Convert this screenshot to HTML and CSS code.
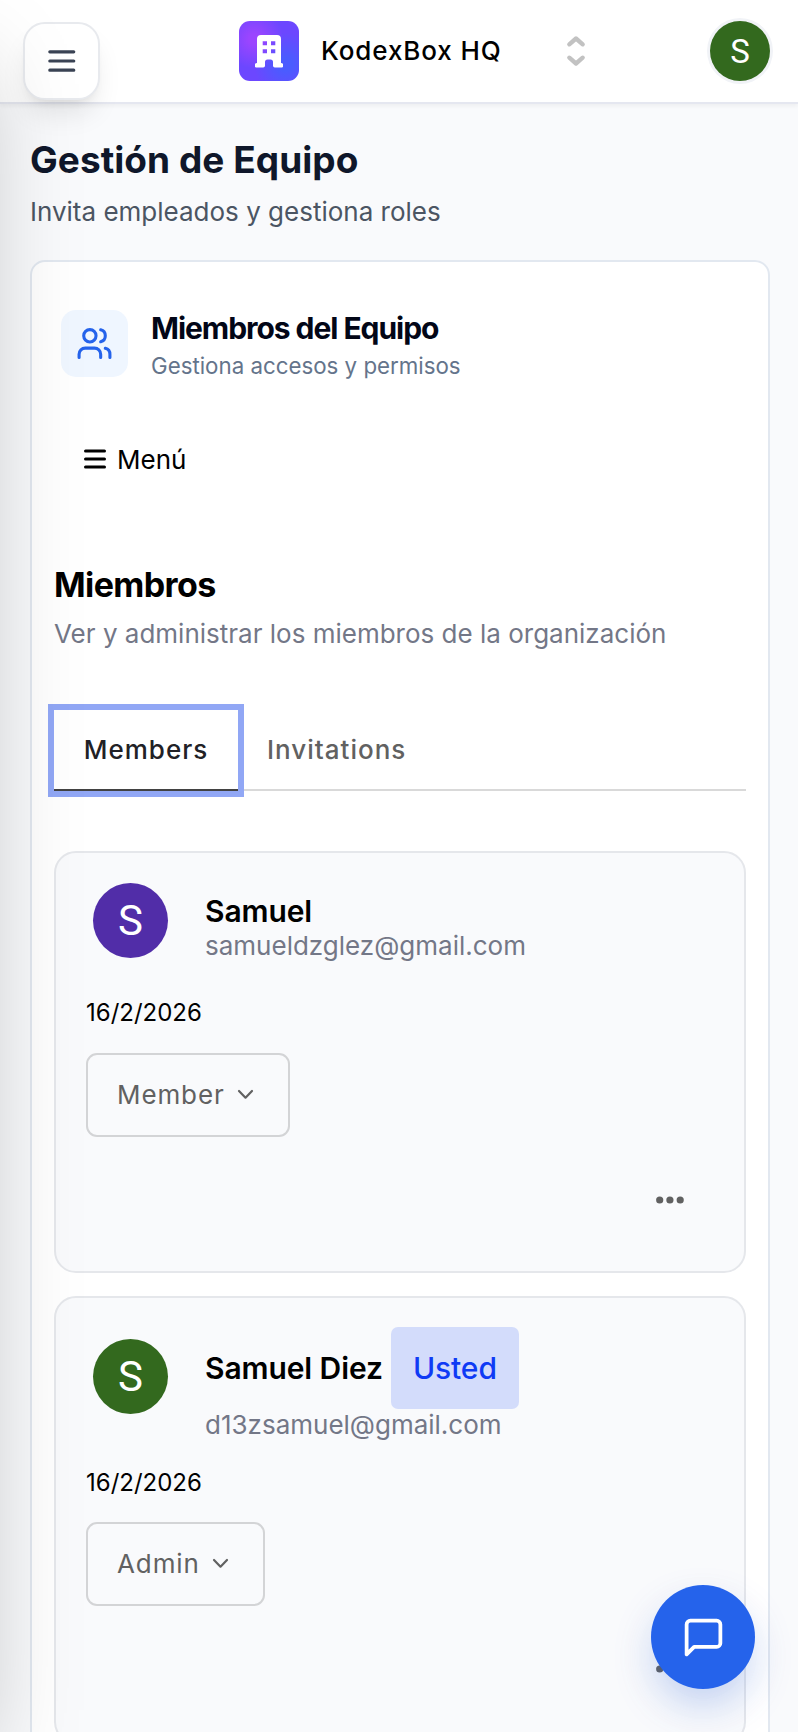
FILE: index.html
```html
<!DOCTYPE html>
<html lang="es">
<head>
    <meta charset="UTF-8">
    <meta name="viewport" content="width=device-width, initial-scale=1.0">
    <title>Gestión de Equipo</title>
    <link rel="stylesheet" href="styles.css">
</head>
<body>
    <header class="topbar">
        <button class="menu-toggle" aria-label="Abrir menú">
            <svg width="35" height="36" viewBox="0 0 24 24" fill="none" stroke="currentColor" stroke-width="2.2" stroke-linecap="round"><path d="M4 5.700h16.400M4 12h16.400M4 18.300h16.400"/></svg>
        </button>
        <div class="org-switcher">
            <span class="org-logo">
                <svg width="28" height="33" viewBox="0 0 28 33" fill="#fff"><path fill-rule="evenodd" d="M6 0h16a4 4 0 0 1 4 4v24a2.2 2.2 0 0 1 0 4.6h-6.2a1.8 1.8 0 0 1-1.8-1.8V27a2.5 2.5 0 0 0-2.5-2.5h-3A2.500 2.500 0 0 0 10 27v3.800a1.8 1.8 0 0 1-1.8 1.8H2a2.200 2.200 0 0 1 0-4.600V4a4 4 0 0 1 4-4zM7.700 6.300v4h4.300v-4zM16 6.300v4h4.300v-4zM7.700 14.300v4h4.300v-4zM16 14.300v4h4.300v-4z"/></svg>
            </span>
            <span class="org-name">KodexBox HQ</span>
            <svg class="org-arrows" width="20" height="32" viewBox="0 0 20 32" fill="none" stroke="#c2c2c2" stroke-width="4.3" stroke-linecap="round" stroke-linejoin="round"><path d="M3.3 9.300L10 3.500l6.700 5.800M3.300 22.700l6.700 5.800 6.700-5.800"/></svg>
        </div>
        <div class="user-avatar">S</div>
    </header>

    <main>
        <h1>Gestión de Equipo</h1>
        <p class="subtitle">Invita empleados y gestiona roles</p>

        <section class="panel">
            <div class="panel-header">
                <div class="panel-icon">
                    <svg width="37" height="37" viewBox="0 0 24 24" fill="none" stroke="currentColor" stroke-width="2" stroke-linecap="round" stroke-linejoin="round"><path d="M16 21v-2a4 4 0 0 0-4-4H6a4 4 0 0 0-4 4v2"/><circle cx="9" cy="7" r="4"/><path d="M22 21v-2a4 4 0 0 0-3-3.870"/><path d="M16 3.130a4 4 0 0 1 0 7.750"/></svg>
                </div>
                <div>
                    <h2>Miembros del Equipo</h2>
                    <p>Gestiona accesos y permisos</p>
                </div>
            </div>

            <button class="nav-menu">
                <svg width="22" height="20" viewBox="0 0 22 20" stroke="#000" stroke-width="3" stroke-linecap="round"><path d="M1.500 2h19M1.500 10h19M1.500 18h19"/></svg>
                <span>Menú</span>
            </button>

            <h3>Miembros</h3>
            <p class="description">Ver y administrar los miembros de la organización</p>

            <div class="tabs">
                <button class="tab active">Members</button>
                <button class="tab">Invitations</button>
            </div>

            <div class="member">
                <div class="member-info">
                    <div class="avatar purple">S</div>
                    <div>
                        <div class="name">Samuel</div>
                        <div class="email">samueldzglez@gmail.com</div>
                    </div>
                </div>
                <div class="date">16/2/2026</div>
                <button class="role">Member
                    <svg width="17" height="12" viewBox="0 0 17 12" fill="none" stroke="currentColor" stroke-width="2.2" stroke-linecap="round" stroke-linejoin="round"><path d="M2 2l6.500 6.700L15 2"/></svg>
                </button>
                <div class="actions">
                    <svg width="28" height="8" viewBox="0 0 28 8" fill="currentColor"><circle cx="3.7" cy="4" r="3.6"/><circle cx="13.9" cy="4" r="3.6"/><circle cx="24.2" cy="4" r="3.6"/></svg>
                </div>
            </div>

            <div class="member self">
                <div class="member-info">
                    <div class="avatar green">S</div>
                    <div>
                        <div class="name">Samuel Diez <span class="badge">Usted</span></div>
                        <div class="email">d13zsamuel@gmail.com</div>
                    </div>
                </div>
                <div class="date">16/2/2026</div>
                <button class="role">Admin
                    <svg width="17" height="12" viewBox="0 0 17 12" fill="none" stroke="currentColor" stroke-width="2.2" stroke-linecap="round" stroke-linejoin="round"><path d="M2 2l6.500 6.700L15 2"/></svg>
                </button>
                <div class="actions">
                    <svg width="28" height="8" viewBox="0 0 28 8" fill="currentColor"><circle cx="3.7" cy="4" r="3.6"/><circle cx="13.9" cy="4" r="3.6"/><circle cx="24.2" cy="4" r="3.6"/></svg>
                </div>
            </div>
        </section>
    </main>

    <!-- Menú lateral cerrado -->
    <aside class="sidebar"></aside>

    <button class="chat-btn" aria-label="Chat">
        <svg width="45" height="45" viewBox="0 0 24 24" fill="none" stroke="currentColor" stroke-width="2" stroke-linecap="round" stroke-linejoin="round"><path d="M21 15a2 2 0 0 1-2 2H7l-4 4V5a2 2 0 0 1 2-2h14a2 2 0 0 1 2 2z"/></svg>
    </button>
</body>
</html>
```
FILE: styles.css
```css
* { box-sizing: border-box; margin: 0; padding: 0; }
body { font-family: 'Inter', sans-serif; font-size: 26px; background: #f9fafc; color: #000; height: 1732px; overflow: hidden; }
button { font: inherit; border: none; background: none; cursor: pointer; }
svg { display: block; flex-shrink: 0; }

.topbar { display: flex; align-items: flex-start; height: 104px; padding: 21px 28px 0 23px; background: #fff; border-bottom: 2px solid #e5e7f0; box-shadow: 0 2px 4px rgba(0, 0, 0, 0.05); }
.menu-toggle { display: flex; align-items: center; justify-content: center; width: 77px; height: 78px; margin-top: 1px; border: 2px solid #e8eaee; border-radius: 22px; background: #fff; color: #3a4354; box-shadow: 0 18px 28px -6px rgba(0, 0, 0, 0.1), 0 7px 11px -7px rgba(0, 0, 0, 0.1); }
.org-switcher { display: flex; align-items: center; height: 60px; width: 347px; margin-left: 139px; }
.org-logo { display: flex; align-items: center; justify-content: center; width: 60px; height: 60px; border-radius: 11px; background: radial-gradient(circle at 25% 30%, #9b45ff 8%, transparent 48%), radial-gradient(circle at 78% 72%, #4a5cff 10%, transparent 50%), #6c47ff; }
.org-name { margin-left: 22px; margin-top: -2px; font-weight: 500; letter-spacing: 0.9px; white-space: nowrap; }
.org-arrows { margin-left: auto; }
.user-avatar { display: flex; align-items: center; justify-content: center; width: 60px; height: 60px; margin-left: auto; border-radius: 50%; background: #33691e; color: #fff; font-family: 'Roboto', sans-serif; font-size: 33px; box-shadow: 0 0 0 3px #f1f3f7; }

main { padding: 33px 28px 0 30px; }
h1 { font-size: 37px; line-height: 46px; font-weight: 700; letter-spacing: 0.05px; color: #0f172a; }
.subtitle { margin-top: 10px; line-height: 37px; color: #4b5563; }

.panel { height: 1520px; margin-top: 30px; padding: 47px 22px 0; border: 2px solid #e2e8f0; border-radius: 15px; background: #fff; }
.panel-header { display: flex; align-items: flex-start; gap: 23px; padding-left: 7px; }
.panel-icon { display: flex; align-items: center; justify-content: center; width: 67px; height: 67px; margin-top: 1px; border-radius: 15px; background: #eff6ff; color: #2563eb; }
.panel-header h2 { margin-top: 1px; font-size: 30px; line-height: 37px; font-weight: 700; letter-spacing: -1.05px; color: #020617; }
.panel-header p { margin-top: 4px; font-size: 22.3px; line-height: 30px; color: #64748b; }
.nav-menu { display: flex; align-items: center; gap: 11px; height: 56px; margin-top: 50px; padding-left: 30px; }

h3 { margin-top: 76px; font-size: 34px; line-height: 44px; font-weight: 700; letter-spacing: -0.6px; }
.description { margin-top: 9px; line-height: 36px; color: #737787; }

.tabs { display: flex; height: 81px; margin-top: 58px; box-shadow: inset 0 -2px #d9d9d9; }
.tab { padding: 0 29px 2px; font-weight: 500; letter-spacing: 1px; color: #616161; }
.tab.active { width: 184px; padding-bottom: 0; color: #212126; border-bottom: 2px solid #424242; box-shadow: 0 0 0 6px #91a7f5; }

.member { height: 422px; margin-top: 23px; padding: 30px; border: 2px solid #e5e7eb; border-radius: 22px; background: #f9fafc; }
.tabs + .member { margin-top: 60px; }
.member-info { display: flex; gap: 37px; height: 114px; padding-left: 7px; }
.avatar { display: flex; align-items: center; justify-content: center; width: 75px; height: 75px; border-radius: 50%; color: #fff; font-family: 'Roboto', sans-serif; font-size: 42px; }
.purple { background: #512da8; }
.green { background: #33691e; }
.name { display: flex; align-items: center; height: 36px; margin-top: 10px; font-size: 30px; font-weight: 600; letter-spacing: -0.1px; }
.email { line-height: 34px; color: #737787; }
.date { font-size: 24px; line-height: 32px; }
.role { display: flex; align-items: center; gap: 12px; height: 84px; margin-top: 24px; padding: 0 34px 2px 29px; border: 2px solid #d3d4d6; border-radius: 11px; letter-spacing: 0.9px; color: #616161; }
.role svg { margin-top: 2px; }
.actions { display: flex; justify-content: flex-end; margin: 59px 30px 0 0; color: #616161; }

.self { height: 448px; }
.self .member-info { height: 139px; }
.self .avatar { margin-top: 11px; }
.self .name { height: 82px; margin-top: -1px; }
.self .email { line-height: 31px; }
.self .role { margin-top: 23px; }
.badge { margin-left: 8px; padding: 0 22px; border-radius: 7px; background: #d3dcfb; color: #0f3bf5; font-weight: 500; line-height: 82px; }

.sidebar { position: fixed; top: 0; left: -475px; width: 475px; height: 1732px; background: #fff; box-shadow: 0 46px 93px -22px rgba(0, 0, 0, 0.25); }
.chat-btn { position: fixed; left: 651px; top: 1585px; display: flex; align-items: center; justify-content: center; width: 104px; height: 104px; border-radius: 50%; background: #2563eb; color: #fff; box-shadow: 0 18px 56px rgba(0, 0, 0, 0.03), 0 19px 46px -8px rgba(37, 99, 235, 0.3); }
```
